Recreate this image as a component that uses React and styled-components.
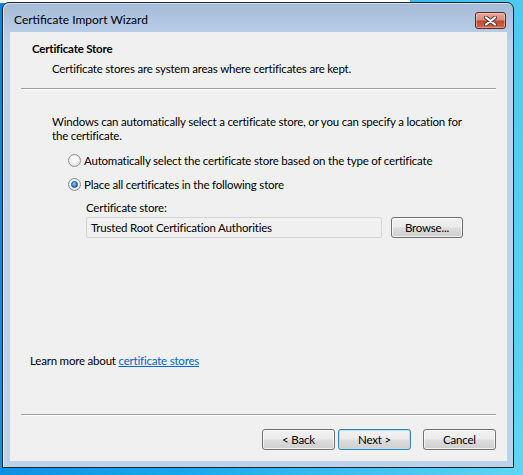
import React from 'react';
import styled, { createGlobalStyle } from 'styled-components';

const GlobalStyle = createGlobalStyle`
  html, body {
    margin: 0;
    padding: 0;
    background: #1487e0;
  }
  body {
    font-family: Lato, "Noto Sans", sans-serif;
    font-size: 11.5px;
    letter-spacing: -0.2px;
    color: #000;
  }
`;

const Desktop = styled.div`
  width: 523px;
  height: 475px;
  box-sizing: border-box;
  padding: 2px 0 0 2px;
  overflow: hidden;
  background:
    linear-gradient(#ffffff, #ffffff) 0 0 / 410px 3px no-repeat,
    linear-gradient(100deg, #0a86df 0%, #19a8ec 45%, #5fd6f2 100%);
`;

const Window = styled.div`
  width: 512px;
  height: 466px;
  box-sizing: border-box;
  border: 1px solid #1d2733;
  border-radius: 7px 7px 0 0;
  background: linear-gradient(#a4bbd7 0px, #b4cae4 24px, #bcd2ea 40px, #bcd2ea 100%);
  box-shadow: inset 1px 1px 0 rgba(255, 255, 255, 0.55);
  display: flex;
  flex-direction: column;
`;

const TitleBar = styled.div`
  height: 29px;
  flex: none;
  display: flex;
  justify-content: space-between;
  align-items: flex-start;
  padding: 0 7px 0 11px;
`;

const Title = styled.div`
  padding-top: 9px;
  font-size: 12px;
  letter-spacing: 0;
  line-height: 15px;
  color: #000;
`;

const CloseButton = styled.div`
  margin-top: 9px;
  width: 31px;
  height: 17px;
  box-sizing: border-box;
  border: 1px solid #5a2a24;
  border-radius: 3px;
  background: linear-gradient(#e9a99b 0%, #d98a79 45%, #c0472f 55%, #cf6b50 100%);
  box-shadow: inset 0 0 0 1px rgba(255, 220, 210, 0.45);
  display: flex;
  align-items: center;
  justify-content: center;
`;

const Frame = styled.div`
  flex: 1;
  padding: 0 6px 6px 7px;
  display: flex;
`;

const Content = styled.div`
  flex: 1;
  background: #f0f0f0;
  display: flex;
  flex-direction: column;
  line-height: 15px;
`;

const Header = styled.div`
  padding: 9px 0 0 22px;
`;

const HeaderTitle = styled.div`
  font-weight: bold;
`;

const HeaderText = styled.div`
  margin: 5px 0 0 20px;
`;

const Separator = styled.div`
  margin: ${(p) => p.$top}px 11px 0;
  border-top: 1px solid #a0a0a0;
  border-bottom: 1px solid #ffffff;
`;

const Body = styled.div`
  padding: 25px 0 0 42px;
`;

const Para = styled.div`
  line-height: 14px;
  white-space: pre;
`;

const Options = styled.div`
  margin: 9px 0 0 16px;
  display: flex;
  flex-direction: column;
  gap: 8px;
`;

const RadioRow = styled.label`
  display: flex;
  align-items: center;
  gap: 3px;
  height: 16px;
  white-space: nowrap;
`;

const Radio = styled.span`
  width: 13px;
  height: 13px;
  flex: none;
  box-sizing: border-box;
  border-radius: 50%;
  border: 1px solid #8a8c8e;
  background: radial-gradient(circle at 50% 40%, #ffffff 0%, #f4f4f4 40%, #d6d7d9 100%);
  display: flex;
  align-items: center;
  justify-content: center;

  &::after {
    content: '';
    display: ${(p) => (p.$checked ? 'block' : 'none')};
    width: 7px;
    height: 7px;
    box-sizing: border-box;
    border-radius: 50%;
    border: 1px solid #1d4b78;
    background: radial-gradient(circle at 40% 35%, #9fd6ff 0%, #3c8ed4 50%, #1b5c9a 100%);
  }
`;

const StoreBlock = styled.div`
  margin: 8px 0 0 34px;
`;

const StoreRow = styled.div`
  margin-top: 2px;
  display: flex;
  gap: 9px;
`;

const StoreField = styled.div`
  width: 296px;
  height: 21px;
  box-sizing: border-box;
  border: 1px solid #d4d4d4;
  border-radius: 2px;
  background: #f0f0f0;
  padding: 0 4px;
  display: flex;
  align-items: center;
`;

const Button = styled.button`
  width: ${(p) => p.$w || 73}px;
  height: 21px;
  box-sizing: border-box;
  padding: 0;
  font: inherit;
  letter-spacing: inherit;
  color: #000;
  border: 1px solid ${(p) => (p.$default ? '#3c7fb1' : '#707070')};
  border-radius: 3px;
  background: linear-gradient(#f2f2f2 0%, #ebebeb 48%, #dddddd 52%, #cfcfcf 100%);
  box-shadow: inset 0 0 0 1px ${(p) => (p.$default ? '#aee3f9' : 'rgba(255,255,255,0.7)')};
  display: flex;
  align-items: center;
  justify-content: center;
`;

const LearnMore = styled.div`
  margin-top: auto;
  padding-left: 20px;
`;

const Link = styled.a`
  color: #0066cc;
  text-decoration: underline;
  cursor: pointer;
`;

const Footer = styled.div`
  display: flex;
  justify-content: flex-end;
  padding: 13px 11px 11px 0;
  gap: 3px;
`;

const CancelSlot = styled.div`
  margin-left: 9px;
`;

const CloseGlyph = () => (
  <svg width="13" height="10" viewBox="0 0 13 10">
    <path d="M2 1.5 L11 8.5 M11 1.5 L2 8.5" stroke="#4b3a38" strokeWidth="4" strokeLinecap="round" />
    <path d="M2 1.5 L11 8.5 M11 1.5 L2 8.5" stroke="#ffffff" strokeWidth="2.2" strokeLinecap="round" />
  </svg>
);

const App = () => (
  <>
    <GlobalStyle />
    <Desktop>
      <Window>
        <TitleBar>
          <Title>Certificate Import Wizard</Title>
          <CloseButton>
            <CloseGlyph />
          </CloseButton>
        </TitleBar>
        <Frame>
          <Content>
            <Header>
              <HeaderTitle>Certificate Store</HeaderTitle>
              <HeaderText>Certificate stores are system areas where certificates are kept.</HeaderText>
            </Header>
            <Separator $top={12} />
            <Body>
              <Para>
                {'Windows can automatically select a certificate store, or you can specify a location for\nthe certificate.'}
              </Para>
              <Options>
                <RadioRow>
                  <Radio />
                  Automatically select the certificate store based on the type of certificate
                </RadioRow>
                <RadioRow>
                  <Radio $checked />
                  Place all certificates in the following store
                </RadioRow>
              </Options>
              <StoreBlock>
                <div>Certificate store:</div>
                <StoreRow>
                  <StoreField>Trusted Root Certification Authorities</StoreField>
                  <Button $w={72}>Browse...</Button>
                </StoreRow>
              </StoreBlock>
            </Body>
            <LearnMore>
              Learn more about <Link>certificate stores</Link>
            </LearnMore>
            <Separator $top={46} />
            <Footer>
              <Button>&lt; Back</Button>
              <Button $default>Next &gt;</Button>
              <CancelSlot>
                <Button>Cancel</Button>
              </CancelSlot>
            </Footer>
          </Content>
        </Frame>
      </Window>
    </Desktop>
  </>
);

export default App;
